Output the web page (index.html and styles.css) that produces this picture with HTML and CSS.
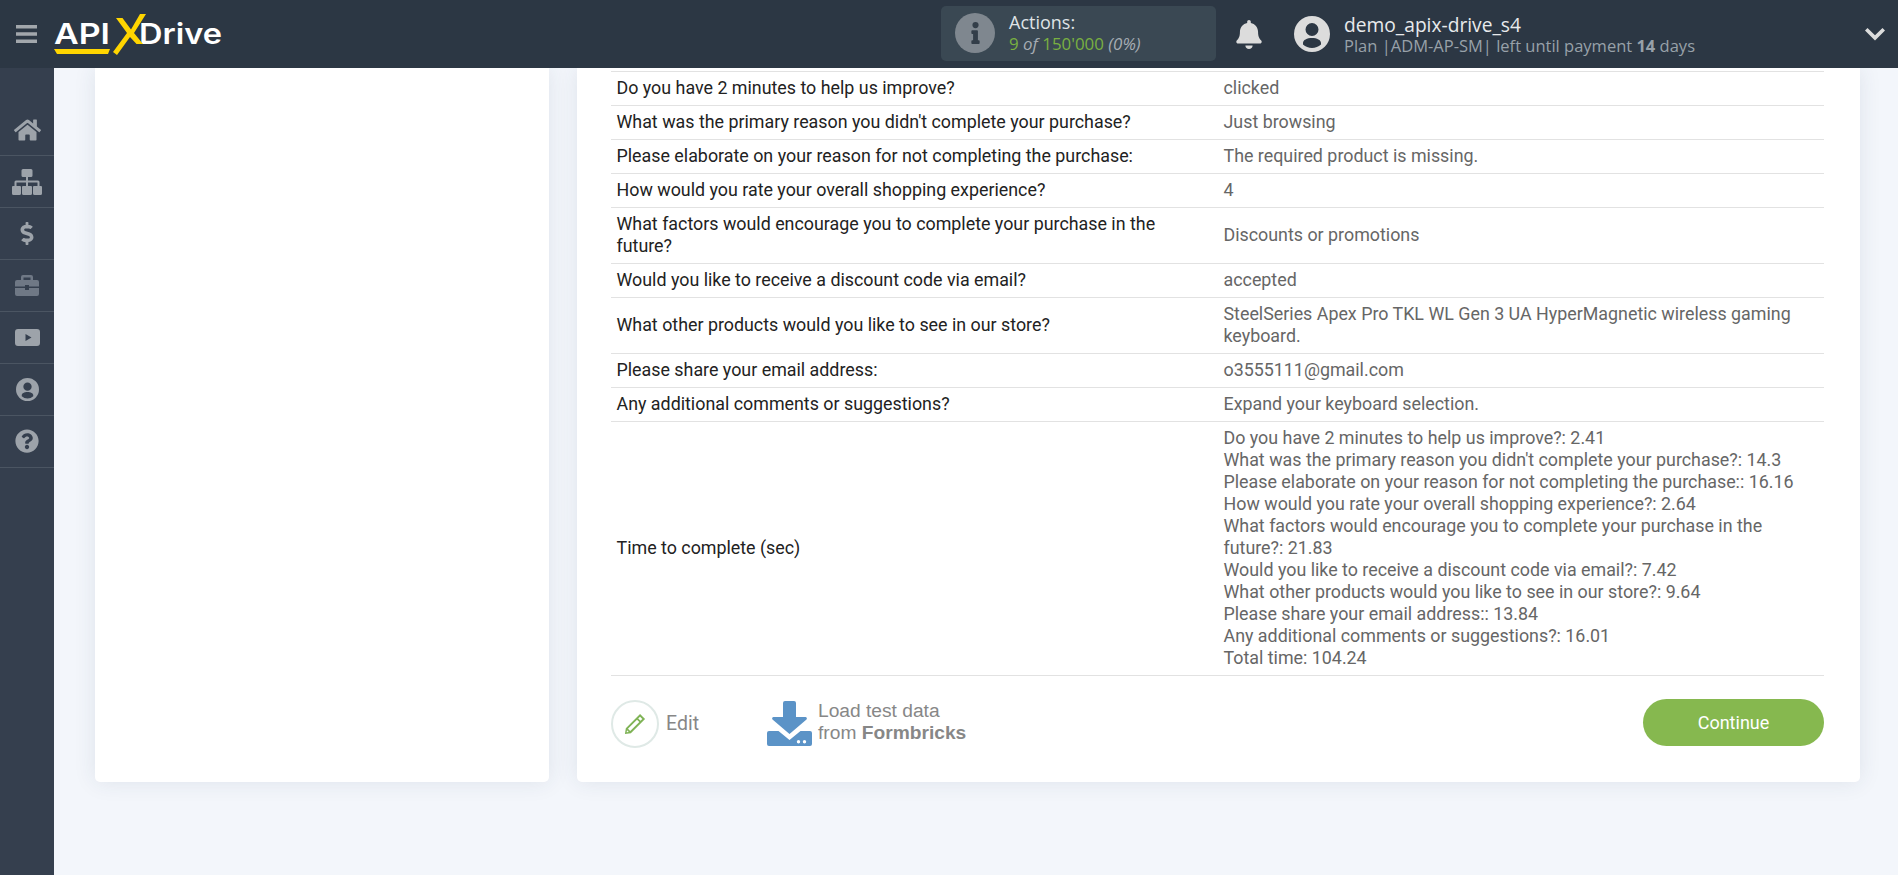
FILE: index.html
```html
<!DOCTYPE html>
<html lang="en">
<head>
<meta charset="utf-8">
<title>ApiX-Drive</title>
<link rel="stylesheet" href="styles.css">
</head>
<body>
<header class="topbar">
  <div class="brand">
    <svg class="burger" viewBox="0 0 21 18"><path d="M0 0h21v3.4H0zM0 7.3h21v3.4H0zM0 14.6h21V18H0z"/></svg>
    <svg class="logo" viewBox="0 0 170 42">
      <text class="logo-text" x="0" y="30" textLength="56" lengthAdjust="spacingAndGlyphs">API</text>
      <text class="logo-text" x="85" y="30" textLength="83" lengthAdjust="spacingAndGlyphs">Drive</text>
      <path class="logo-x" d="M0 35h56l-2 5H3zM59 38 73 19 62 4h6.500l8.500 11.500L86 0h6L80 19l9 11h-6.500L76 23 63 41z"/>
    </svg>
  </div>
  <div class="actions">
    <span class="info-dot"><svg viewBox="0 0 192 512"><path d="M20 424h20V280H20c-11 0-20-9-20-20v-48c0-11 9-20 20-20h112c11 0 20 9 20 20v212h20c11 0 20 9 20 20v48c0 11-9 20-20 20H20c-11 0-20-9-20-20v-48c0-11 9-20 20-20zM96 0a72 72 0 1 0 0 144A72 72 0 0 0 96 0z"/></svg></span>
    <div class="actions-text">
      <div class="actions-title">Actions:</div>
      <div class="actions-count"><span class="green">9</span> <i>of</i> <span class="green">150'000</span> <i>(0%)</i></div>
    </div>
  </div>
  <svg class="bell" viewBox="0 0 448 512"><path d="M224 512c35.320 0 63.970-28.650 63.970-64H160.030c0 35.350 28.650 64 63.970 64zm215.390-149.710c-19.320-20.760-55.470-51.990-55.470-154.290 0-77.700-54.480-139.900-127.940-155.160V32c0-17.670-14.320-32-31.980-32s-31.980 14.330-31.980 32v20.840C118.560 68.100 64.080 130.300 64.080 208c0 102.300-36.150 133.530-55.470 154.290-6 6.450-8.660 14.160-8.610 21.710.11 16.400 12.980 32 32.100 32h383.800c19.120 0 32-15.600 32.100-32 .05-7.550-2.610-15.270-8.610-21.710z"/></svg>
  <svg class="avatar" viewBox="0 0 36 36"><path fill-rule="evenodd" d="M18 0a18 18 0 1 1 0 36 18 18 0 0 1 0-36zm0 7a6.500 6.500 0 1 0 0 13 6.500 6.500 0 0 0 0-13zm0 15c-5 0-9 2-9 5v1.500a13.500 13.500 0 0 0 18 0V27c0-3-4-5-9-5z"/></svg>
  <div class="user">
    <div class="user-name">demo_apix-drive_s4</div>
    <div class="user-plan">Plan |ADM-AP-SM| left until payment <b>14</b> days</div>
  </div>
  <svg class="chevron" viewBox="0 0 20 14"><path d="M2.500 1 10 8.300 17.500 1 20 3.500 10 13.500 0 3.500z"/></svg>
</header>

<div class="layout">
  <nav class="sidebar">
    <a class="nav-item"><svg class="ic ic-home" viewBox="0 0 576 512"><path d="M280.370 148.260L96 300.110V464a16 16 0 0 0 16 16l112.060-.29a16 16 0 0 0 15.920-16V368a16 16 0 0 1 16-16h64a16 16 0 0 1 16 16v95.640a16 16 0 0 0 16 16.050L464 480a16 16 0 0 0 16-16V300L295.670 148.260a12.190 12.190 0 0 0-15.300 0zM571.600 251.470L488 182.560V44.050a12 12 0 0 0-12-12h-56a12 12 0 0 0-12 12v72.610L318.470 43a48 48 0 0 0-61 0L4.340 251.470a12 12 0 0 0-1.600 16.900l25.500 31A12 12 0 0 0 45.150 301l235.220-193.740a12.190 12.190 0 0 1 15.300 0L530.900 301a12 12 0 0 0 16.900-1.600l25.500-31a12 12 0 0 0-1.700-16.930z"/></svg></a>
    <a class="nav-item"><svg class="ic ic-map" viewBox="0 0 30 26"><path d="M11 0h8a1.500 1.500 0 0 1 1.500 1.500v5A1.500 1.500 0 0 1 19 8h-3v3.500h10a1.500 1.500 0 0 1 1.500 1.500v4H29a1 1 0 0 1 1 1v6.500a1.500 1.500 0 0 1-1.500 1.500h-6a1.500 1.500 0 0 1-1.500-1.500V18a1 1 0 0 1 1-1h3.500v-3.500H16V17h3a1 1 0 0 1 1 1v6.500a1.500 1.500 0 0 1-1.500 1.500h-7a1.500 1.500 0 0 1-1.500-1.500V18a1 1 0 0 1 1-1h3v-3.500H4.500V17H8a1 1 0 0 1 1 1v6.500A1.500 1.500 0 0 1 7.500 26h-6A1.500 1.500 0 0 1 0 24.500V18a1 1 0 0 1 1-1h1.500v-4A1.500 1.500 0 0 1 4 11.500h10V8h-3a1.500 1.500 0 0 1-1.500-1.500v-5A1.500 1.500 0 0 1 11 0z"/></svg></a>
    <a class="nav-item"><svg class="ic ic-dollar" viewBox="0 0 288 512"><path d="M209.200 233.400l-108-31.600C88.700 198.200 80 186.500 80 173.500c0-16.300 13.200-29.500 29.500-29.500h66.300c12.200 0 24.200 3.700 34.200 10.500 6.100 4.100 14.300 3.100 19.500-2l34.800-34c7.100-6.900 6.100-18.400-1.800-24.500C238 74.800 207.400 64.100 176 64V16c0-8.800-7.200-16-16-16h-32c-8.800 0-16 7.200-16 16v48h-2.500C45.800 64-5.400 118.700.5 183.600c4.200 46.100 39.400 83.600 83.800 96.600l102.500 30c12.500 3.700 21.200 15.300 21.200 28.300 0 16.300-13.200 29.500-29.500 29.500h-66.300C100 368 88 364.300 78 357.500c-6.100-4.100-14.300-3.100-19.500 2l-34.800 34c-7.100 6.900-6.100 18.400 1.800 24.500 24.500 19.200 55.100 29.900 86.500 30v48c0 8.800 7.200 16 16 16h32c8.800 0 16-7.200 16-16v-48.200c46.600-.9 90.300-28.600 105.700-72.700 21.500-61.600-14.600-124.800-72.500-141.700z"/></svg></a>
    <a class="nav-item"><svg class="ic ic-case" viewBox="0 0 24 21"><path d="M8 0h8a2 2 0 0 1 2 2v3h4a2 2 0 0 1 2 2v4.500H14V10h-4v1.500H0V7a2 2 0 0 1 2-2h4V2a2 2 0 0 1 2-2zm.5 2.500V5h7V2.500zM0 13h10v2h4v-2h10v6a2 2 0 0 1-2 2H2a2 2 0 0 1-2-2z"/></svg></a>
    <a class="nav-item"><svg class="ic ic-video" viewBox="0 0 25 17"><path fill-rule="evenodd" d="M3 0h19a3 3 0 0 1 3 3v11a3 3 0 0 1-3 3H3a3 3 0 0 1-3-3V3a3 3 0 0 1 3-3zm7.500 5v7l6-3.500z"/></svg></a>
    <a class="nav-item"><svg class="ic ic-user" viewBox="0 0 36 36"><path fill-rule="evenodd" d="M18 0a18 18 0 1 1 0 36 18 18 0 0 1 0-36zm0 7a6.500 6.500 0 1 0 0 13 6.500 6.500 0 0 0 0-13zm0 15c-5 0-9 2-9 5v1.500a13.500 13.500 0 0 0 18 0V27c0-3-4-5-9-5z"/></svg></a>
    <a class="nav-item"><svg class="ic ic-help" viewBox="0 0 512 512"><path d="M504 256c0 137-111 248-248 248S8 393 8 256C8 119.080 119 8 256 8s248 111.080 248 248zM262.650 90c-54.500 0-89.260 22.960-116.550 63.770-3.540 5.290-2.350 12.420 2.720 16.270l34.700 26.310c5.200 3.950 12.630 3.010 16.670-2.120 17.870-22.660 30.110-35.800 57.300-35.800 20.430 0 45.700 13.150 45.700 32.960 0 14.980-12.370 22.670-32.540 33.980C247.130 238.530 216 254.940 216 296v4c0 6.630 5.370 12 12 12h56c6.630 0 12-5.370 12-12v-1.330c0-28.460 83.190-29.650 83.190-106.670 0-58-60.160-102-116.540-102zM256 338c-25.360 0-46 20.640-46 46 0 25.360 20.640 46 46 46s46-20.640 46-46c0-25.360-20.640-46-46-46z"/></svg></a>
  </nav>

  <main class="content">
    <aside class="card card-left"></aside>
    <section class="card card-right">
      <table class="data">
        <tr><td>Do you have 2 minutes to help us improve?</td><td>clicked</td></tr>
        <tr><td>What was the primary reason you didn't complete your purchase?</td><td>Just browsing</td></tr>
        <tr><td>Please elaborate on your reason for not completing the purchase:</td><td>The required product is missing.</td></tr>
        <tr><td>How would you rate your overall shopping experience?</td><td>4</td></tr>
        <tr><td>What factors would encourage you to complete your purchase in the future?</td><td>Discounts or promotions</td></tr>
        <tr><td>Would you like to receive a discount code via email?</td><td>accepted</td></tr>
        <tr><td>What other products would you like to see in our store?</td><td>SteelSeries Apex Pro TKL WL Gen 3 UA HyperMagnetic wireless gaming keyboard.</td></tr>
        <tr><td>Please share your email address:</td><td>o3555111@gmail.com</td></tr>
        <tr><td>Any additional comments or suggestions?</td><td>Expand your keyboard selection.</td></tr>
        <tr><td>Time to complete (sec)</td><td>Do you have 2 minutes to help us improve?: 2.41<br>What was the primary reason you didn't complete your purchase?: 14.3<br>Please elaborate on your reason for not completing the purchase:: 16.16<br>How would you rate your overall shopping experience?: 2.64<br>What factors would encourage you to complete your purchase in the future?: 21.83<br>Would you like to receive a discount code via email?: 7.42<br>What other products would you like to see in our store?: 9.64<br>Please share your email address:: 13.84<br>Any additional comments or suggestions?: 16.01<br>Total time: 104.24</td></tr>
      </table>
      <div class="footer-row">
        <a class="edit">
          <span class="edit-circle"><svg viewBox="0 0 24 24"><path fill-rule="evenodd" d="M17.500 1 23 6.500 7.500 22 1 23l1-6.500zM17.500 4 15.500 6l2.500 2.500 2-2zM14.200 7.300 4.300 17.200l2.500 2.500 9.900-9.900zM3.300 18.800 2.900 21.100l2.300-.4z"/></svg></span>
          <span class="edit-label">Edit</span>
        </a>
        <a class="load">
          <svg class="load-icon" viewBox="0 0 45 45"><path d="M18 0h9a2 2 0 0 1 2 2v14h9.500a1.500 1.500 0 0 1 1 2.500L22.500 33 5.500 18.500a1.500 1.500 0 0 1 1-2.500H16V2a2 2 0 0 1 2-2z"/><path fill-rule="evenodd" d="M2 30h9.500l11 9 11-9H43a2 2 0 0 1 2 2v11a2 2 0 0 1-2 2H2a2 2 0 0 1-2-2V32a2 2 0 0 1 2-2zm29.500 9a1.700 1.700 0 1 0 0 3.400 1.700 1.700 0 0 0 0-3.400zm6 0a1.700 1.700 0 1 0 0 3.400 1.700 1.700 0 0 0 0-3.400z"/></svg>
          <span class="load-text">Load test data<br>from <b>Formbricks</b></span>
        </a>
        <button class="continue">Continue</button>
      </div>
    </section>
  </main>
</div>
</body>
</html>
```

FILE: styles.css
```css
* { box-sizing: border-box; }
html, body { margin: 0; height: 875px; overflow: hidden; }
body { background: #f3f6fb; font-family: Roboto, "Liberation Sans", sans-serif; display: flex; flex-direction: column; }

.topbar { height: 68px; flex: none; background: #2c3744; display: flex; align-items: center; position: relative; z-index: 2; }
.brand { width: 941px; flex: none; display: flex; align-items: center; padding-left: 16px; }
.burger { width: 21px; height: 18px; fill: #a2a7ac; }
.logo { width: 170px; height: 42px; margin-left: 17px; margin-top: 2px; }
.logo-text { font-family: Inter, "Liberation Sans", sans-serif; font-weight: 600; font-size: 29px; fill: #fff; }
.logo-x { fill: #ffd500; }

.actions { width: 275px; height: 55px; margin-top: -2px; background: #3a4853; border-radius: 5px; display: flex; align-items: center; padding-left: 14px; font-family: "Open Sans", sans-serif; }
.info-dot { width: 40px; height: 40px; border-radius: 50%; background: #7f878f; display: flex; align-items: center; justify-content: center; }
.info-dot svg { width: 9px; height: 22px; fill: #333e49; }
.actions-text { margin-left: 14px; }
.actions-title { font-size: 18px; line-height: 22px; color: #dfe3e6; }
.actions-count { font-size: 16.900px; line-height: 22px; color: #a6adb3; }
.green { color: #79b041; }
.bell { width: 26px; height: 29px; margin-left: 20px; fill: #dcdcdc; }
.avatar { width: 36px; height: 36px; margin-left: 32px; fill: #dcdcdc; }
.user { margin-left: 14px; font-family: "Open Sans", sans-serif; flex: 1; }
.user-name { font-size: 19.200px; line-height: 23px; color: #e8eaec; }
.user-plan { font-size: 16.500px; line-height: 20px; color: #98a1a9; }
.user-plan b { font-weight: 700; }
.chevron { width: 20px; height: 14px; margin-right: 13px; fill: #dcdcdc; }

.layout { flex: 1; display: flex; min-height: 0; }
.sidebar { width: 54px; flex: none; background: #353f4e; padding-top: 36.600px; }
.nav-item { height: 51.900px; display: flex; align-items: center; justify-content: center; border-bottom: 1px solid #4b5562; }
.ic { fill: #9da3aa; }
.ic-home { width: 27px; height: 24px; }
.ic-map { width: 30px; height: 26px; }
.ic-dollar { width: 14px; height: 23px; }
.ic-case { width: 24px; height: 21px; fill: #6f7885; }
.ic-video { width: 25px; height: 17px; }
.ic-user { width: 23px; height: 23px; }
.ic-help { width: 24px; height: 24px; }

.content { flex: 1; display: flex; gap: 28px; align-items: flex-start; padding: 0 38px 0 41px; }
.card { height: 714px; background: #fff; border-radius: 0 0 5px 5px; box-shadow: 0 0 22px rgba(40, 60, 90, .10); }
.card-left { width: 454px; flex: none; }
.card-right { flex: 1; padding: 3px 36px 0 34px; }

.data { width: 100%; border-collapse: collapse; table-layout: fixed; font-size: 17.850px; line-height: 22px; }
.data tr { border-top: 1px solid #e2e2e2; border-bottom: 1px solid #e2e2e2; }
.data td { padding: 4.500px 6px 6.500px; vertical-align: middle; }
.data td:first-child { color: #222; padding-left: 5.500px; }
.data td:last-child { color: #666; }

.footer-row { display: flex; align-items: center; padding-top: 23px; }
.edit { display: flex; align-items: center; width: 156px; }
.edit-circle { width: 48px; height: 48px; border: 2px solid #dfe9e6; border-radius: 50%; display: flex; align-items: center; justify-content: center; }
.edit-circle svg { width: 22px; height: 22px; fill: #7fb356; }
.edit-label { margin-left: 7px; font-size: 19.500px; color: #878787; }
.load { display: flex; align-items: center; flex: 1; }
.load-icon { width: 45px; height: 45px; fill: #5b93c7; }
.load-text { margin-left: 6px; margin-bottom: 4px; font-family: "Liberation Sans", sans-serif; font-size: 19.200px; line-height: 22px; color: #878787; }
.continue { width: 181px; height: 47px; margin-bottom: 2px; border: 0; border-radius: 24px; background: #86b84f; color: #fff; font-family: Roboto, sans-serif; font-size: 18px; }
```
